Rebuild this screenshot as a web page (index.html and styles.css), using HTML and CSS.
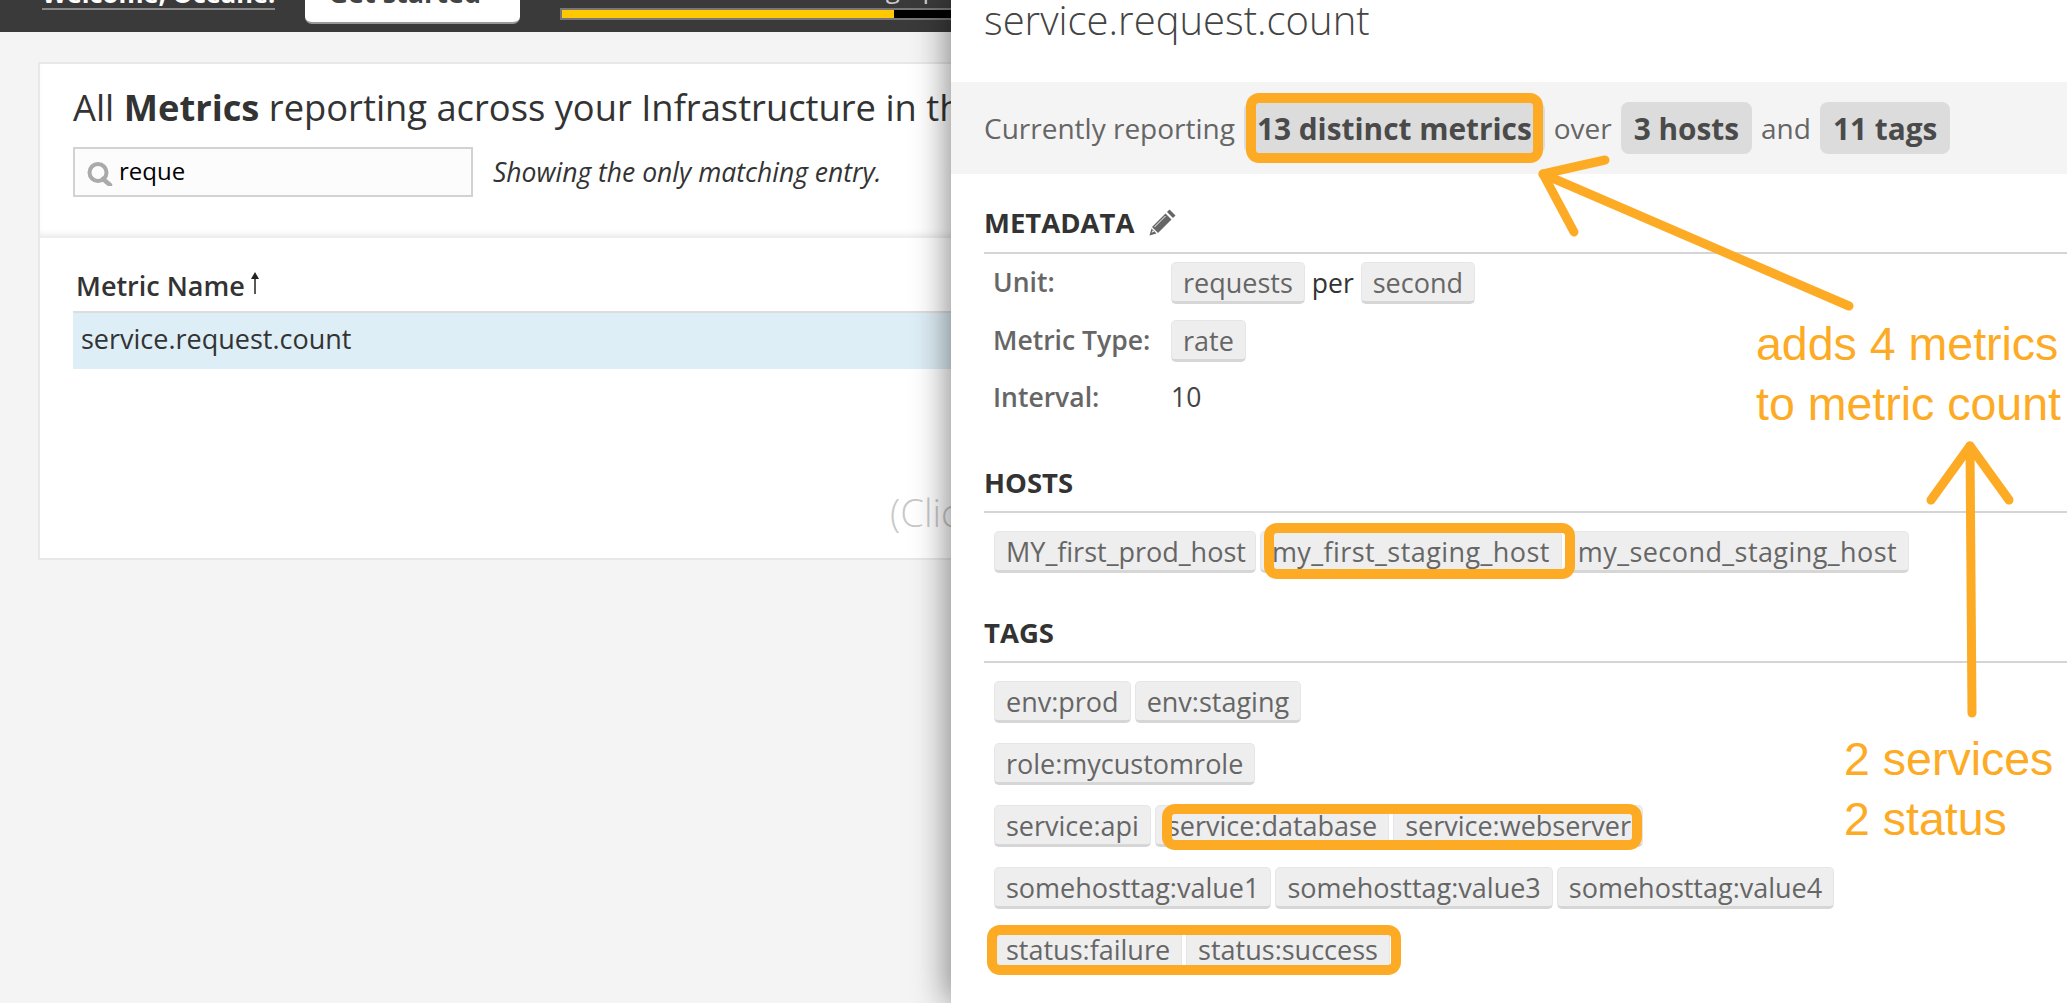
FILE: index.html
```html
<!DOCTYPE html>
<html lang="en">
<head>
    <meta charset="UTF-8">
    <title>Metrics Summary</title>
    <link rel="stylesheet" href="styles.css">
</head>
<body>
    <div class="topbar">
        <a class="welcome">Welcome, Oceane!</a>
        <div class="start-btn">Get started <span class="caret"></span></div>
        <div class="progress-wrap">
            <div class="progress-label">Setting up</div>
            <div class="progress"><div class="progress-fill"></div></div>
        </div>
    </div>

    <div class="card">
        <div class="card-head">
            <h1 class="page-title">All <b>Metrics</b> reporting across your Infrastructure in the past hour</h1>
            <div class="filter-row">
                <div class="search-box">
                    <svg class="search-icon" viewBox="0 0 26 24" width="26" height="24">
                        <circle cx="11" cy="10.500" r="8.500" fill="none" stroke="#aaa" stroke-width="4"/>
                        <path d="M16 17l7 6" stroke="#aaa" stroke-width="4.500" stroke-linecap="round"/>
                    </svg>
                    <span class="search-text">reque</span>
                </div>
                <div class="match-note">Showing the only matching entry.</div>
            </div>
        </div>
        <div class="card-body">
            <div class="col-head">Metric Name
                <svg class="sort-arrow" viewBox="0 0 10 24" width="10" height="24">
                    <path d="M5 23V3" stroke="#222" stroke-width="1.500"/>
                    <path d="M1 8l4-7 4 7z" fill="#222"/>
                </svg>
            </div>
            <div class="metric-row">service.request.count</div>
            <div class="click-hint">(Click on a metric to see more details)</div>
        </div>
    </div>

    <div class="panel">
        <div class="panel-title">service.request.count</div>
        <div class="strip">
            <span>Currently reporting</span>
            <span class="pill pill-first">13 distinct metrics</span>
            <span>over</span>
            <span class="pill">3 hosts</span>
            <span>and</span>
            <span class="pill">11 tags</span>
        </div>

        <div class="section-head section-meta">METADATA
            <svg class="pencil" viewBox="0 0 28 28" width="28" height="28">
                <path d="M20.500 1.500l6 6-2.500 2.500-6-6z" fill="#666"/>
                <path d="M16.500 5.500l6 6L9 25l-6-6z" fill="#666"/>
                <path d="M2.500 20.500l5 5L0.500 27.500z" fill="#666"/>
                <path d="M5.500 19l11-11" stroke="#fff" stroke-width="1"/>
                <path d="M2.600 24.800l1.200-2.600 1.400 1.400z" fill="#fff"/>
            </svg>
        </div>
        <div class="meta-row">
            <div class="meta-label">Unit:</div>
            <span class="chip">requests</span><span class="per">per</span><span class="chip">second</span>
        </div>
        <div class="meta-row">
            <div class="meta-label">Metric Type:</div>
            <span class="chip">rate</span>
        </div>
        <div class="meta-row meta-plain">
            <div class="meta-label">Interval:</div>
            <span class="meta-value">10</span>
        </div>

        <div class="section-head section-hosts">HOSTS</div>
        <div class="chip-row">
            <span class="chip chip-first">MY_first_prod_host</span>
            <span class="chip chip-wide">my_first_staging_host</span>
            <span class="chip chip-wide">my_second_staging_host</span>
        </div>

        <div class="section-head section-tags">TAGS</div>
        <div class="tag-rows">
            <div class="chip-row">
                <span class="chip">env:prod</span>
                <span class="chip">env:staging</span>
            </div>
            <div class="chip-row">
                <span class="chip">role:mycustomrole</span>
            </div>
            <div class="chip-row">
                <span class="chip">service:api</span>
                <span class="chip">service:database</span>
                <span class="chip">service:webserver</span>
            </div>
            <div class="chip-row">
                <span class="chip">somehosttag:value1</span>
                <span class="chip">somehosttag:value3</span>
                <span class="chip">somehosttag:value4</span>
            </div>
            <div class="chip-row">
                <span class="chip">status:failure</span>
                <span class="chip">status:success</span>
            </div>
        </div>
    </div>

    <!-- hand drawn notes on top of the screenshot -->
    <div class="notes">
        <div class="mark mark-metrics"></div>
        <div class="mark mark-host"></div>
        <div class="mark mark-service"></div>
        <div class="mark mark-status"></div>
        <svg class="arrows" viewBox="0 0 2067 1003" width="2067" height="1003">
            <g fill="none" stroke="#fdab24" stroke-width="9" stroke-linecap="round" stroke-linejoin="round">
                <path d="M1849 306L1543 174"/>
                <path d="M1605 160L1543 174L1574 232"/>
                <path d="M1972 713L1970 446"/>
                <path d="M1931 500L1970 446L2009 500"/>
            </g>
        </svg>
        <div class="note note-adds">adds 4 metrics</div>
        <div class="note note-count">to metric count</div>
        <div class="note note-services">2 services</div>
        <div class="note note-status">2 status</div>
    </div>
</body>
</html>
```

FILE: styles.css
```css
* {
    box-sizing: border-box;
}

html, body {
    margin: 0;
    height: 1003px;
    overflow: hidden;
}

body {
    position: relative;
    font-family: "Open Sans", "Liberation Sans", sans-serif;
    background: #f4f4f4;
    color: #333;
}

.topbar {
    height: 32px;
    background: #3a3a3a;
    display: flex;
    align-items: flex-end;
    overflow: hidden;
}

.welcome {
    margin-left: 42px;
    margin-bottom: 22px;
    border-bottom: 2px solid #888;
    font-size: 25.500px;
    line-height: 30px;
    font-weight: 700;
    color: #fff;
    white-space: nowrap;
}

.start-btn {
    margin-left: 30px;
    margin-bottom: 8px;
    width: 215px;
    height: 60px;
    padding: 14px 0 0 23px;
    background: #fff;
    border-bottom: 2px solid #999;
    border-radius: 0 0 7px 7px;
    font-size: 27px;
    line-height: 30px;
    font-weight: 700;
    color: #444;
    white-space: nowrap;
}

.caret {
    display: inline-block;
    margin-left: 8px;
    vertical-align: 4px;
    border: 4px solid transparent;
    border-top: 7px solid #444;
    border-bottom: 0;
}

.progress-wrap {
    margin-left: 40px;
    margin-bottom: 12px;
    width: 500px;
}

.progress-label {
    height: 24px;
    margin-bottom: -4px;
    padding-right: 122px;
    text-align: right;
    font-size: 26px;
    line-height: 0;
    color: #ccc;
}

.progress {
    height: 12px;
    background: #000;
    border: 2px solid #777;
    border-right: 0;
}

.progress-fill {
    width: 332px;
    height: 100%;
    background: #ffc800;
}

.card {
    margin: 30px 0 0 38px;
    width: 1900px;
    height: 498px;
    background: #fff;
    border: 2px solid #e8e8e8;
}

.card-head {
    height: 174px;
    padding: 21px 0 0 33px;
    box-shadow: inset 0 -6px 6px -3px #e8e8e8;
}

.page-title {
    margin: 0;
    font-size: 36.300px;
    line-height: 44px;
    font-weight: 400;
    color: #333;
    white-space: nowrap;
}

.filter-row {
    display: flex;
    align-items: center;
    margin-top: 18px;
}

.search-box {
    width: 400px;
    height: 50px;
    display: flex;
    align-items: center;
    padding-left: 12px;
    background: #fcfcfc;
    border: 2px solid #d2d2d2;
}

.search-icon {
    margin-top: 4px;
    margin-right: 6px;
}

.search-text {
    font-size: 24px;
    color: #000;
    margin-top: -4px;
}

.match-note {
    margin-left: 20px;
    font-size: 26.500px;
    font-style: italic;
    color: #333;
}

.card-body {
    padding: 28px 0 0 33px;
}

.col-head {
    display: flex;
    align-items: flex-start;
    gap: 5px;
    height: 45px;
    padding-left: 3px;
    font-size: 27px;
    line-height: 40px;
    font-weight: 600;
    color: #333;
}

.sort-arrow {
    margin-top: 5px;
}

.metric-row {
    height: 58px;
    padding-left: 8px;
    background: #deeef6;
    border-top: 2px solid #ddd;
    font-size: 27px;
    line-height: 52px;
    color: #333;
}

.click-hint {
    margin-top: 118px;
    padding-left: 817px;
    font-size: 38px;
    font-weight: 300;
    line-height: 50px;
    color: #c8c8c8;
    white-space: nowrap;
}

.panel {
    position: absolute;
    top: 0;
    left: 951px;
    right: 0;
    bottom: 0;
    background: #fff;
    box-shadow: -4px 0 32px rgba(0,0,0,0.45);
}

.panel-title {
    height: 82px;
    padding-left: 33px;
    font-size: 40px;
    font-weight: 300;
    line-height: 40px;
    color: #444;
}

.strip {
    height: 92px;
    display: flex;
    align-items: center;
    gap: 9px;
    padding-left: 33px;
    background: #f4f4f4;
    font-size: 28px;
    color: #666;
}

.pill {
    height: 52px;
    padding: 0 13px;
    display: flex;
    align-items: center;
    background: #dcdcdc;
    border-radius: 8px;
    font-size: 29.800px;
    font-weight: 700;
    color: #4a4a4a;
}

.section-head {
    margin-left: 33px;
    border-bottom: 2px solid #d5d5d5;
    font-size: 27.500px;
    font-weight: 700;
    color: #333;
}

.section-meta {
    display: flex;
    align-items: center;
    gap: 15px;
    height: 80px;
    padding-top: 18px;
}

.section-hosts {
    margin-top: 43px;
    height: 52px;
    line-height: 44px;
}

.section-tags {
    margin-top: 38px;
    height: 52px;
    line-height: 44px;
}

.meta-row {
    display: flex;
    align-items: center;
    height: 42px;
    margin: 8px 0 16px 42px;
    font-size: 26.500px;
}

.meta-plain {
    margin-top: -2px;
    margin-bottom: 14px;
}

.meta-label {
    width: 178px;
    margin-top: -3px;
    font-weight: 600;
    color: #666;
}

.meta-plain .meta-label {
    margin-top: 0;
}

.meta-value {
    color: #444;
}

.per {
    margin: 0 7px;
    color: #333;
}

.chip {
    height: 42px;
    padding: 0 11px;
    display: inline-flex;
    align-items: center;
    background: #eee;
    border: 1px solid #e6e6e6;
    border-bottom: 3px solid #d6d6d6;
    border-radius: 5px;
    font-size: 27px;
    color: #666;
    white-space: nowrap;
}

.chip-first {
    padding-right: 9px;
}

.chip-wide {
    letter-spacing: 0.430px;
}

.chip-row {
    display: flex;
    gap: 4px;
    height: 42px;
    margin: 18px 0 0 43px;
}

.tag-rows {
    display: flex;
    flex-direction: column;
    gap: 20px;
    margin-top: 18px;
}

.tag-rows .chip-row {
    margin-top: 0;
}

.notes {
    position: absolute;
    top: 0;
    left: 0;
    width: 2067px;
    height: 1003px;
    pointer-events: none;
}

.arrows {
    position: absolute;
    top: 0;
    left: 0;
}

.mark {
    position: absolute;
    border: 10px solid #fdab24;
    border-radius: 13px;
}

.mark-metrics {
    left: 1246px;
    top: 93px;
    width: 297px;
    height: 70px;
}

.mark-host {
    left: 1264px;
    top: 523px;
    width: 311px;
    height: 56px;
}

.mark-service {
    left: 1162px;
    top: 804px;
    width: 480px;
    height: 46px;
}

.mark-status {
    left: 987px;
    top: 925px;
    width: 414px;
    height: 50px;
}

.note {
    position: absolute;
    font-family: "Liberation Sans", Arial, sans-serif;
    font-size: 46.500px;
    line-height: 48px;
    color: #fdab24;
    white-space: nowrap;
}

.note-adds {
    left: 1756px;
    top: 320px;
}

.note-count {
    left: 1756px;
    top: 380px;
}

.note-services {
    left: 1844px;
    top: 735px;
}

.note-status {
    left: 1844px;
    top: 795px;
}
```
